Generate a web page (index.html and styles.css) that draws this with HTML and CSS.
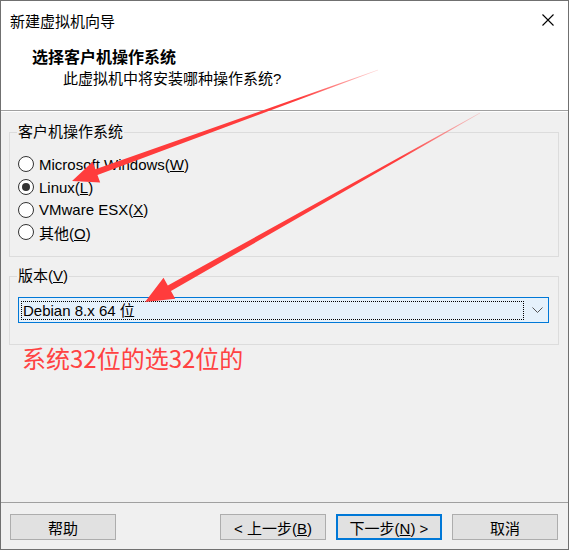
FILE: index.html
```html
<!DOCTYPE html>
<html>
	<head>
		<meta charset="UTF-8">
		<title>新建虚拟机向导</title>
		<link rel="stylesheet" href="styles.css">
	</head>
	<body>
		<div class="window">
			<div class="titlebar">
				<span class="title">新建虚拟机向导</span>
				<svg class="close" width="12" height="12" viewBox="0 0 12 12">
					<path d="M0.5 0.5 L11.5 11.5 M11.5 0.5 L0.5 11.5" stroke="#000" stroke-width="1.1"/>
				</svg>
			</div>
			<div class="header">
				<div class="heading">选择客户机操作系统</div>
				<div class="subtitle">此虚拟机中将安装哪种操作系统?</div>
			</div>
			<div class="content">
				<fieldset class="group group_os">
					<legend>客户机操作系统</legend>
					<label class="radio_row"><input type="radio" name="os"/><span>Microsoft Windows(<u>W</u>)</span></label>
					<label class="radio_row"><input type="radio" name="os" checked/><span>Linux(<u>L</u>)</span></label>
					<label class="radio_row"><input type="radio" name="os"/><span>VMware ESX(<u>X</u>)</span></label>
					<label class="radio_row"><input type="radio" name="os"/><span>其他(<u>O</u>)</span></label>
				</fieldset>
				<fieldset class="group group_ver">
					<legend>版本(<u>V</u>)</legend>
					<div class="combo">
						<span class="combo_text">Debian 8.x 64 位</span>
						<svg class="chevron" width="11" height="6" viewBox="0 0 11 6">
							<path d="M0.5 0.5 L5.5 5.5 L10.5 0.5" fill="none" stroke="#555" stroke-width="1"/>
						</svg>
					</div>
				</fieldset>
				<div class="note">系统32位的选32位的</div>
			</div>
			<div class="footer">
				<button class="btn btn_help">帮助</button>
				<button class="btn">&lt; 上一步(<u>B</u>)</button>
				<button class="btn btn_default">下一步(<u>N</u>) &gt;</button>
				<button class="btn">取消</button>
			</div>
			<!-- 标注箭头 -->
			<svg class="marks" width="570" height="551" viewBox="0 0 570 551">
				<defs>
					<linearGradient id="fade1" gradientUnits="userSpaceOnUse" x1="378" y1="70" x2="300" y2="98">
						<stop offset="0" stop-color="#ff3c3c" stop-opacity="0.2"/>
						<stop offset="1" stop-color="#ff3c3c" stop-opacity="1"/>
					</linearGradient>
					<linearGradient id="fade2" gradientUnits="userSpaceOnUse" x1="480" y1="113" x2="400" y2="158">
						<stop offset="0" stop-color="#ff3c3c" stop-opacity="0.2"/>
						<stop offset="1" stop-color="#ff3c3c" stop-opacity="1"/>
					</linearGradient>
				</defs>
				<polygon fill="url(#fade1)" points="377.9,69.7 95.42,169.31 92.69,161.79 72,181 100.19,182.47 97.46,174.95 378.1,70.3"/>
				<polygon fill="url(#fade2)" points="479.85,112.74 167.82,285.46 163.5,277.8 145,302 175.28,298.7 170.96,291.04 480.15,113.26"/>
			</svg>
		</div>
	</body>
</html>
```

FILE: styles.css
```css
*{
	box-sizing: border-box;
}
body{
	margin: 0;
	font-family: "Liberation Sans", "Noto Sans CJK SC", sans-serif;
	font-size: 15px;
	color: #000;
	background: #fff;
}
.window{
	position: relative;
	width: 569px;
	height: 550px;
	border: 1px solid #707070;
	display: flex;
	flex-direction: column;
	background: #f0f0f0;
}
.titlebar{
	height: 38px;
	background: #fff;
	display: flex;
	align-items: center;
	justify-content: space-between;
	padding: 0 14px 0 9px;
}
.header{
	height: 72px;
	background: #fff;
	border-bottom: 1px solid #a0a0a0;
	padding: 9px 0 0 31px;
}
.heading{
	font-weight: bold;
	line-height: 20px;
	font-size: 16px;
}
.subtitle{
	line-height: 20px;
	margin-top: 1px;
	padding-left: 31px;
}
.content{
	flex: 1;
	padding: 10px 9px 0 8px;
	border-top: 1px solid #fff;
}
.group{
	margin: 0;
	border: 1px solid #dcdcdc;
	padding: 0 9px 0 8px;
}
.group legend{
	padding: 0 1px;
	margin-left: -1px;
	line-height: 20px;
}
.group_os{
	height: 135px;
	padding-top: 11px;
}
.radio_row{
	display: flex;
	align-items: center;
	height: 22.7px;
}
.radio_row input{
	appearance: none;
	-webkit-appearance: none;
	width: 16px;
	height: 16px;
	margin: 0 5px 0 0;
	border: 1px solid #333;
	border-radius: 50%;
	background: #fff;
	display: grid;
	place-content: center;
}
.radio_row input:checked::before{
	content: "";
	width: 8px;
	height: 8px;
	border-radius: 50%;
	background: #333;
}
.group_ver{
	margin-top: 9px;
	height: 79px;
	padding-top: 11px;
}
.combo{
	height: 26px;
	border: 1px solid #0078d7;
	background: #e5f1fb;
	display: flex;
	align-items: center;
	padding: 0 4px 0 2px;
}
.combo_text{
	flex: 1;
	height: 19px;
	line-height: 17px;
	border: 1px dotted #000;
	padding-left: 1px;
	margin-right: 8px;
}
.chevron{
	margin-right: 1px;
}
.note{
	margin: -1px 0 0 13px;
	font-family: "Noto Sans CJK SC", sans-serif;
	font-size: 24px;
	line-height: 28px;
	color: #ff4242;
}
.footer{
	height: 47px;
	border-top: 1px solid #a0a0a0;
	padding: 11px 10px 0 9px;
	display: flex;
	gap: 10px;
}
.btn{
	width: 106px;
	height: 26px;
	font-family: inherit;
	font-size: 15px;
	background: #e1e1e1;
	border: 1px solid #adadad;
	padding: 0;
	color: #000;
}
.btn_help{
	margin-right: auto;
}
.btn_default{
	border: 2px solid #0078d7;
}
.marks{
	position: absolute;
	left: -1px;
	top: -1px;
	pointer-events: none;
}
```
